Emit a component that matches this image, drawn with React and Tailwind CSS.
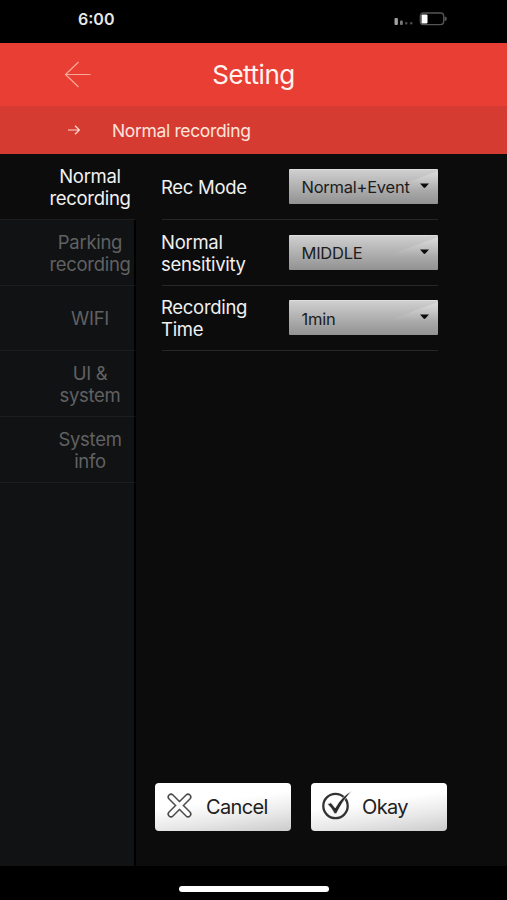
import React, { useState } from "react";

const menuItems = [
  { id: "normal", lines: ["Normal", "recording"] },
  { id: "parking", lines: ["Parking", "recording"] },
  { id: "wifi", lines: ["WIFI"] },
  { id: "ui", lines: ["UI &", "system"] },
  { id: "info", lines: ["System", "info"] },
];

const settings = [
  { id: "mode", lines: ["Rec Mode"], value: "Normal+Event" },
  { id: "sensitivity", lines: ["Normal", "sensitivity"], value: "MIDDLE" },
  { id: "time", lines: ["Recording", "Time"], value: "1min" },
];

const StatusBar = () => (
  <div className="h-[43px] shrink-0 bg-black flex justify-between pl-[78px] pr-[60px]">
    <span className="mt-[9px] text-[16px] leading-[20px] font-semibold text-[#e8e8e8]">6:00</span>
    <svg className="mt-[11px]" width="54" height="16" viewBox="0 0 54 16">
      <rect x="1.5" y="7" width="3.4" height="7" rx="1" fill="#a0a0a0" />
      <rect x="7" y="9.5" width="2.8" height="4.5" rx="1" fill="#777" />
      <rect x="12" y="11" width="2.5" height="2.6" rx="1" fill="#4a4a4a" />
      <rect x="17" y="11" width="2.5" height="2.6" rx="1" fill="#4a4a4a" />
      <rect x="27.3" y="2" width="23.4" height="11.6" rx="3" fill="none" stroke="#555" strokeWidth="1.3" />
      <rect x="28.5" y="3.4" width="6" height="9" rx="1.2" fill="#fff" />
      <path d="M51.5 5.4 a2.4 2.4 0 0 1 0 4.8 z" fill="#555" />
    </svg>
  </div>
);

const Select = ({ value }) => (
  <button className="relative w-[149px] h-[35px] shrink-0 overflow-hidden rounded-[1px] border-t border-[#dedede] bg-linear-to-b from-[#cfcfcf] to-[#929292] text-left pl-[13px]">
    <svg className="absolute inset-0" width="149" height="34" viewBox="0 0 149 34">
      <defs>
        <linearGradient id="shine" x1="0" y1="0" x2="0" y2="1">
          <stop offset="0" stopColor="#fff" stopOpacity="0.3" />
          <stop offset="1" stopColor="#fff" stopOpacity="0" />
        </linearGradient>
      </defs>
      <path d="M98 20 L149 1 V20 Z" fill="url(#shine)" />
      <path d="M131 13.5 H140 L136.4 17.5 Q135.5 18.4 134.6 17.5 Z" fill="#0c0c0c" />
    </svg>
    <span className="relative block mt-px -ml-[0.5px] text-[16.5px] leading-[32px] tracking-[-0.25px] text-[#1c1c1c]">{value}</span>
  </button>
);

const App = () => {
  const [active, setActive] = useState("normal");

  return (
    <div className="w-[507px] h-[900px] overflow-hidden bg-black flex flex-col font-['Inter','Liberation_Sans',sans-serif]">
      <StatusBar />

      <header className="h-[63px] shrink-0 bg-[#e93e33] grid grid-cols-[1fr_auto_1fr] items-center">
        <button className="ml-[64px] w-[27px]">
          <svg width="27" height="27" viewBox="0 0 27 27" fill="none" stroke="#f9aa9b" strokeWidth="1.2">
            <path d="M14.5 1 L1.5 13.5 L14.5 26 M1.5 13.5 H26.5" />
          </svg>
        </button>
        <h1 className="text-[26px] leading-[30px] tracking-[-0.45px] text-[#fff3f0]">Setting</h1>
      </header>

      <div className="h-[48px] shrink-0 bg-[#d63b31] flex items-center pl-[68px]">
        <svg width="12" height="12" viewBox="0 0 12 12" fill="none" stroke="#ffd9d0" strokeWidth="1.2">
          <path d="M0 6 H11.3 M7 1.8 L11.3 6 L7 10.2" />
        </svg>
        <span className="ml-[32px] mt-px text-[17.5px] leading-[22px] tracking-[-0.35px] text-[#ffe3dd]">Normal recording</span>
      </div>

      <div className="h-[712px] shrink-0 flex bg-[#0c0c0c]">
        <nav className="w-[136px] shrink-0 flex flex-col">
          {menuItems.map((item) => (
            <button
              key={item.id}
              onClick={() => setActive(item.id)}
              className={`h-[65.8px] shrink-0 pl-[46px] pt-px border-r-2 flex flex-col justify-center items-center text-[18.5px] leading-[22px] tracking-[-0.3px] border-b border-b-[#1b1d1e] ${
                active === item.id
                  ? "text-[#f2f2f2] border-r-transparent"
                  : "bg-[#111214] text-[#606162] border-r-black"
              }`}
            >
              {item.lines.map((line) => (
                <span key={line}>{line}</span>
              ))}
            </button>
          ))}
          <div className="grow bg-[#111214] border-r-2 border-r-black" />
        </nav>

        <main className="w-[302px] pl-[26px] flex flex-col justify-between">
          <div>
            {settings.map((row) => (
              <div
                key={row.id}
                className="h-[65.8px] flex justify-between items-center border-b border-[#272727]"
              >
                <div className="pt-px -ml-px text-[18.5px] leading-[22px] tracking-[-0.3px] text-[#f0f0f0]">
                  {row.lines.map((line) => (
                    <p key={line}>{line}</p>
                  ))}
                </div>
                <Select value={row.value} />
              </div>
            ))}
          </div>

          <div className="flex gap-[20px] -ml-[7px] -mr-[10px] mb-[35px] text-[20px] tracking-[-0.65px] text-[#202020]">
            <button className="w-[136px] h-[48px] rounded-[4px] bg-[linear-gradient(172deg,#fff_40%,#e8e8e8_70%,#cbcbcb)] flex items-center pl-[12px]">
              <svg className="-mt-[3px]" width="25" height="25" viewBox="0 0 25 25" fill="none" strokeLinecap="round">
                <path d="M4 4 L21 21 M21 4 L4 21" stroke="#4a4a4a" strokeWidth="7" />
                <path d="M4 4 L21 21 M21 4 L4 21" stroke="#fbfbfb" strokeWidth="4" />
              </svg>
              <span className="ml-[14px] -mt-px">Cancel</span>
            </button>
            <button className="w-[136px] h-[48px] rounded-[4px] bg-[linear-gradient(172deg,#fff_40%,#e8e8e8_70%,#cbcbcb)] flex items-center pl-[10px]">
              <svg className="-mt-[4px]" width="32" height="30" viewBox="0 0 32 30">
                <circle cx="14.5" cy="16" r="12.2" fill="none" stroke="#333" strokeWidth="2.3" />
                <path d="M6.5 14 L10 12.8 L14.2 18 Q21 6 30.5 1.2 Q21.5 10.5 15.4 23.6 L13.6 23.8 Q10.5 17.5 6.5 14 Z" fill="#2b2b2b" stroke="#f8f8f8" strokeWidth="0.6" />
              </svg>
              <span className="ml-[9px] -mt-px">Okay</span>
            </button>
          </div>
        </main>
      </div>

      <footer className="grow bg-black flex justify-center">
        <div className="mt-[19.5px] w-[150px] h-[6px] rounded-full bg-white" />
      </footer>
    </div>
  );
};

export default App;
